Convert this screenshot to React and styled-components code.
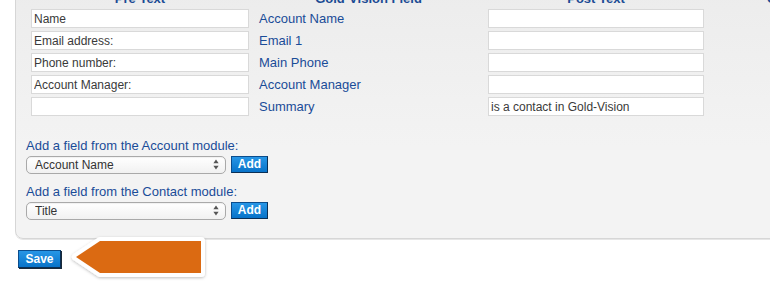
import React from "react";
import styled, { createGlobalStyle } from "styled-components";

const Global = createGlobalStyle`
  html, body { margin: 0; padding: 0; background: #fff; overflow: hidden; }
  body { font-family: "Liberation Sans", Arial, Helvetica, sans-serif; width: 770px; height: 300px; }
`;

const Page = styled.div`
  padding-left: 15px;
`;

const Panel = styled.div`
  margin-top: -15px;
  width: 900px;
  box-sizing: border-box;
  padding: 6px 10px 19px 10px;
  background: linear-gradient(#ececec, #f3f3f3 160px);
  border: 1px solid #d6d6d6;
  border-radius: 8px;
  box-shadow: 0 1px 0 #e6e6e6;
`;

const Grid = styled.div`
  margin-left: 5px;
  display: grid;
  grid-template-columns: 218px 219px 216px 137px;
  column-gap: 10px;
  row-gap: 3px;
  align-items: center;
`;

const Head = styled.div`
  font-size: 13px;
  line-height: 14px;
  height: 14px;
  font-weight: bold;
  color: #1b4b94;
  text-align: center;
  white-space: nowrap;
`;

const TextBox = styled.input`
  box-sizing: border-box;
  width: 100%;
  height: 19px;
  margin: 0;
  padding: 0 0 0 2px;
  border: 1px solid #d9d9d9;
  background: #fff;
  font-family: "Liberation Sans", Arial, sans-serif;
  font-size: 12px;
  color: #3a3a3a;
  outline: none;
`;

const FieldName = styled.div`
  font-size: 13px;
  line-height: 19px;
  color: #1a4c98;
`;

const Empty = styled.div``;

const ModuleLabel = styled.div`
  font-size: 13px;
  line-height: 16px;
  color: #1a4c98;
  margin-top: ${(p) => p.$top}px;
  margin-bottom: 1px;
`;

const Line = styled.div`
  display: flex;
  align-items: center;
  gap: 5px;
`;

const SelectWrap = styled.div`
  position: relative;
  width: 200px;
  height: 18px;
`;

const Select = styled.select`
  appearance: none;
  -webkit-appearance: none;
  box-sizing: border-box;
  width: 100%;
  height: 100%;
  margin: 0;
  padding: 0 0 0 8px;
  border: 1px solid #a9a9a9;
  border-radius: 5px;
  background: linear-gradient(#ffffff, #f1f1f1);
  box-shadow: inset 0 1px 1px rgba(0, 0, 0, 0.06);
  font-family: "Liberation Sans", Arial, sans-serif;
  font-size: 12px;
  color: #333;
  outline: none;
`;

const Arrows = styled.svg`
  position: absolute;
  right: 7px;
  top: 4px;
  pointer-events: none;
`;

const BlueButton = styled.button`
  box-sizing: border-box;
  width: ${(p) => p.$w}px;
  height: ${(p) => p.$h}px;
  margin: 0;
  padding: 0;
  border: 1px solid #0b4d8d;
  border-right-color: #0a2f55;
  border-bottom-color: #0a2f55;
  background: linear-gradient(#2796e6, #0873c9);
  color: #fff;
  font-family: "Liberation Sans", Arial, sans-serif;
  font-size: 12px;
  font-weight: bold;
  line-height: 1;
  cursor: pointer;
`;

const SaveRow = styled.div`
  display: flex;
  align-items: center;
  margin-top: -6px;
  padding-left: 3px;
`;

const SaveButton = styled(BlueButton)`
  margin-top: 2px;
  box-shadow: 1px 1px 0 #1b2a3a;
`;

const Callout = styled.svg`
  margin-left: 5px;
  display: block;
`;

const SelectArrows = () => (
  <Arrows width="6" height="11" viewBox="0 0 6 11">
    <path d="M3 0.5 L5.6 4.2 L0.4 4.2 Z" fill="#555" />
    <path d="M3 10.5 L5.6 6.8 L0.4 6.8 Z" fill="#555" />
  </Arrows>
);

const rows = [
  { pre: "Name", field: "Account Name", post: "" },
  { pre: "Email address:", field: "Email 1", post: "" },
  { pre: "Phone number:", field: "Main Phone", post: "" },
  { pre: "Account Manager:", field: "Account Manager", post: "" },
  { pre: "", field: "Summary", post: "is a contact in Gold-Vision" },
];

export default function App() {
  const pts = "34,8 135,8 135,40 34,40 10,24";
  return (
    <Page>
      <Global />
      <Panel>
        <Grid>
          <Head>Pre Text</Head>
          <Head>Gold-Vision Field</Head>
          <Head>Post Text</Head>
          <Head>Case</Head>
          {rows.map((r, i) => (
            <React.Fragment key={i}>
              <TextBox defaultValue={r.pre} />
              <FieldName>{r.field}</FieldName>
              <TextBox defaultValue={r.post} />
              <Empty />
            </React.Fragment>
          ))}
        </Grid>
        <ModuleLabel $top={22}>Add a field from the Account module:</ModuleLabel>
        <Line>
          <SelectWrap>
            <Select defaultValue="Account Name">
              <option>Account Name</option>
            </Select>
            <SelectArrows />
          </SelectWrap>
          <BlueButton $w={37} $h={17}>Add</BlueButton>
        </Line>
        <ModuleLabel $top={11}>Add a field from the Contact module:</ModuleLabel>
        <Line>
          <SelectWrap>
            <Select defaultValue="Title">
              <option>Title</option>
            </Select>
            <SelectArrows />
          </SelectWrap>
          <BlueButton $w={37} $h={17}>Add</BlueButton>
        </Line>
      </Panel>
      <SaveRow>
        <SaveButton $w={43} $h={18}>Save</SaveButton>
        <Callout width="146" height="50" viewBox="0 0 146 50">
          <defs>
            <filter id="sh" x="-20%" y="-30%" width="140%" height="160%">
              <feDropShadow dx="0" dy="1" stdDeviation="1.5" floodColor="#000" floodOpacity="0.25" />
            </filter>
          </defs>
          <polygon points={pts} fill="#fff" stroke="#fff" strokeWidth="8" strokeLinejoin="round" filter="url(#sh)" />
          <polygon points={pts} fill="#db6a12" />
        </Callout>
      </SaveRow>
    </Page>
  );
}
